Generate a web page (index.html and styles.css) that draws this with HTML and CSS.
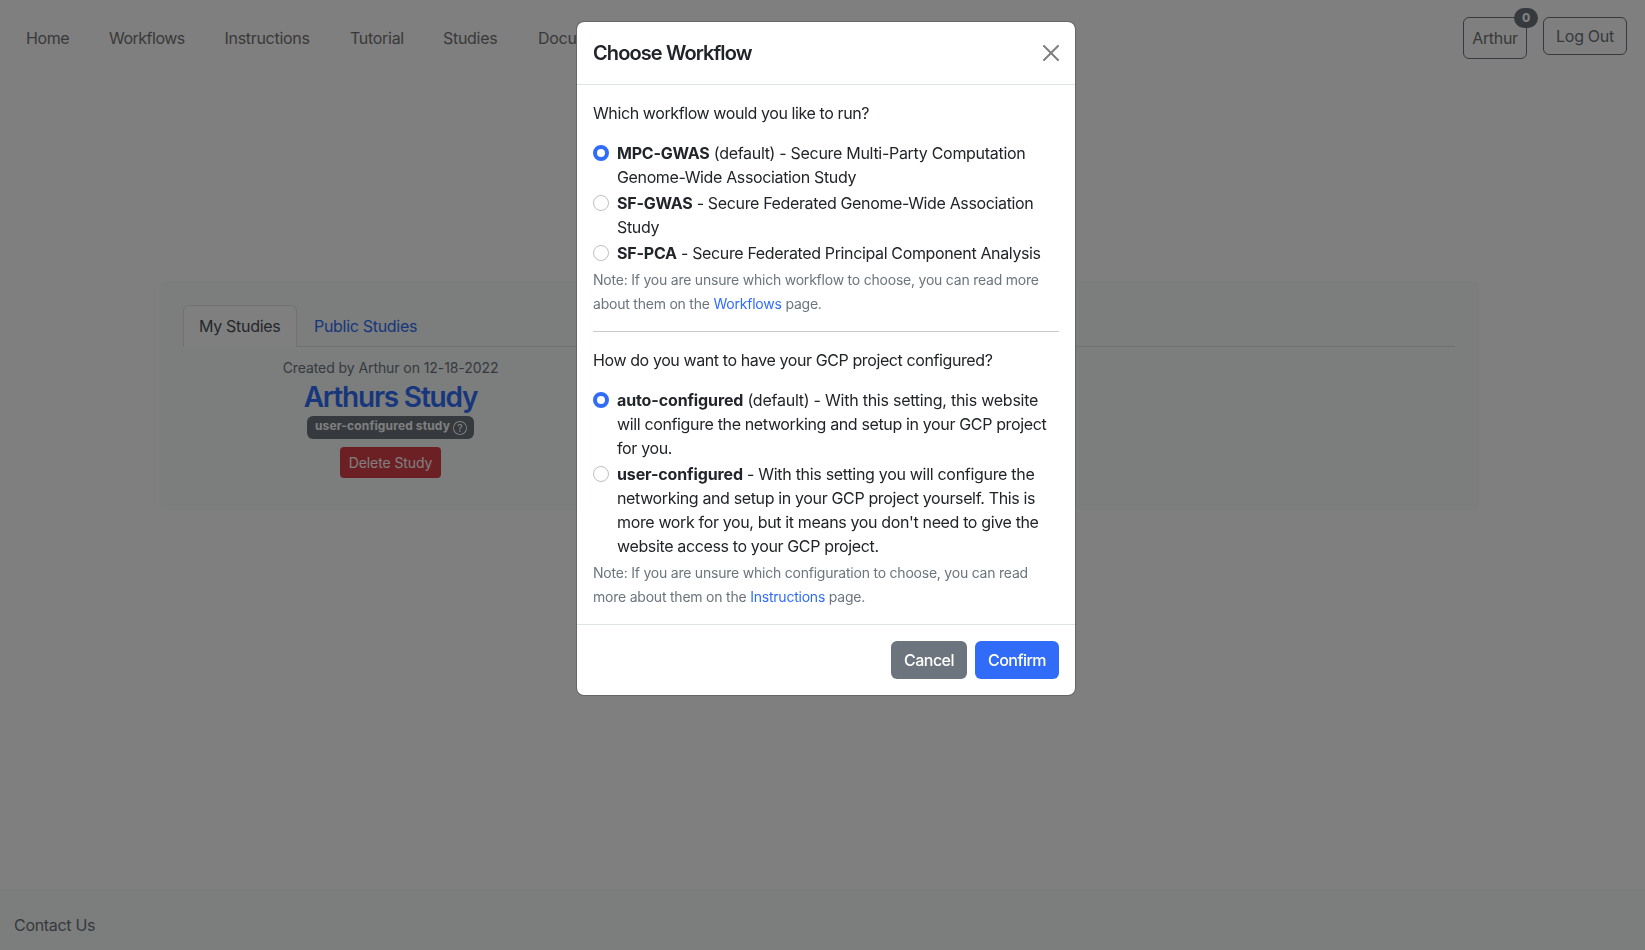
FILE: index.html
```
<!DOCTYPE html>
<html lang="en">
<head>
<meta charset="utf-8">
<title>Studies</title>
<link rel="stylesheet" href="styles.css">
</head>
<body>
<div class="page">
  <header class="topbar">
    <nav class="topnav">
      <a class="w-home">Home</a><a class="w-work">Workflows</a><a class="w-inst">Instructions</a><a class="w-tut">Tutorial</a><a class="w-stud">Studies</a><a class="w-docu">Docu</a>
    </nav>
    <div class="account">
      <button class="user-btn">Arthur<span class="count">0</span></button>
      <button class="logout-btn">Log Out</button>
    </div>
  </header>
  <main class="panel">
    <div class="tabs">
      <a class="tab active">My Studies</a>
      <a class="tab">Public Studies</a>
    </div>
    <section class="study">
      <div class="created">Created by Arthur on 12-18-2022</div>
      <h3 class="study-title">Arthurs Study</h3>
      <span class="badge"><span>user-configured study</span>
        <svg width="14" height="14" viewBox="0 0 16 16" fill="currentColor"><path d="M8 15A7 7 0 1 1 8 1a7 7 0 0 1 0 14zm0 1A8 8 0 1 0 8 0a8 8 0 0 0 0 16z"/><path d="M5.255 5.786a.237.237 0 0 0 .241.247h.825c.138 0 .248-.113.266-.25.09-.656.54-1.134 1.342-1.134.686 0 1.314.343 1.314 1.168 0 .635-.374.927-.965 1.371-.673.489-1.206 1.06-1.168 1.987l.003.217a.25.25 0 0 0 .25.246h.811a.25.25 0 0 0 .25-.25v-.105c0-.718.273-.927 1.01-1.486.609-.463 1.244-.977 1.244-2.056 0-1.511-1.276-2.241-2.673-2.241-1.267 0-2.655.59-2.75 2.286zm1.557 5.763c0 .533.425.927 1.01.927.609 0 1.028-.394 1.028-.927 0-.552-.42-.94-1.029-.94-.584 0-1.009.388-1.009.94z"/></svg>
      </span>
      <button class="delete-btn">Delete Study</button>
    </section>
  </main>
  <footer class="footer">Contact Us</footer>
</div>
<div class="backdrop">
  <div class="modal">
    <div class="modal-header">
      <h5 class="modal-title">Choose Workflow</h5>
      <svg class="close" width="16" height="16" viewBox="0 0 16 16"><path d="M.293.293a1 1 0 0 1 1.414 0L8 6.586 14.293.293a1 1 0 1 1 1.414 1.414L9.414 8l6.293 6.293a1 1 0 0 1-1.414 1.414L8 9.414l-6.293 6.293a1 1 0 0 1-1.414-1.414L6.586 8 .293 1.707a1 1 0 0 1 0-1.414z"/></svg>
    </div>
    <div class="modal-body">
      <p class="question">Which workflow would you like to run?</p>
      <label class="choice"><i class="radio on"></i><span><b class="caps">MPC-GWAS</b> <span class="wide">(default) - Secure Multi-Party Computation</span><br>Genome-Wide Association Study</span></label>
      <label class="choice"><i class="radio"></i><span><b class="caps">SF-GWAS</b> - Secure Federated Genome-Wide Association<br>Study</span></label>
      <label class="choice"><i class="radio"></i><span><b class="caps">SF-PCA</b> - Secure Federated Principal Component Analysis</span></label>
      <div class="note">Note: If you are unsure which workflow to choose, you can read more<br>about them on the <a>Workflows</a> page.</div>
      <hr>
      <p class="question">How do you want to have your GCP project configured?</p>
      <label class="choice"><i class="radio on"></i><span><b>auto-configured</b> <span class="wider">(default) - With this setting, this website</span><br>will configure the networking and setup in your GCP project<br>for you.</span></label>
      <label class="choice"><i class="radio"></i><span><b>user-configured</b> <span class="wide">- With this setting you will configure the</span><br>networking and setup in your GCP project yourself. This is<br>more work for you, but it means you don't need to give the<br>website access to your GCP project.</span></label>
      <div class="note">Note: If you are unsure which configuration to choose, you can read<br>more about them on the <a>Instructions</a> page.</div>
    </div>
    <div class="modal-footer">
      <button class="btn cancel">Cancel</button>
      <button class="btn confirm">Confirm</button>
    </div>
  </div>
</div>
</body>
</html>
```
FILE: styles.css
```
* { box-sizing: border-box; }
body {
  margin: 0;
  font: 400 16px/24px Inter, "Liberation Sans", sans-serif;
  letter-spacing: -0.3px;
  color: #212529;
  background: #fff;
  overflow: hidden;
}
button { font: inherit; letter-spacing: inherit; color: inherit; padding: 0; white-space: nowrap; }
.page { height: 950px; display: flex; flex-direction: column; }
.topbar { height: 281px; flex: none; display: flex; justify-content: space-between; align-items: flex-start; padding: 17px 18px 0 26px; }
.topnav { display: flex; gap: 40px; padding-top: 9px; color: #737373; white-space: nowrap; }
.w-home { width: 43px; letter-spacing: -0.4px; }
.w-work { width: 75.5px; letter-spacing: -0.5px; }
.w-inst { width: 85.5px; }
.w-tut { width: 53px; }
.w-stud { width: 55px; }
.account { display: flex; gap: 16px; align-items: flex-start; }
.user-btn { position: relative; width: 64px; height: 42px; border: 1px solid #6c757d; border-radius: 6px; background: none; color: #737373; }
.count { position: absolute; left: 50px; top: -10px; width: 24px; height: 20px; border-radius: 10px; background: #6c757d; color: #fff; font: 800 12px/20px Inter, sans-serif; }
.logout-btn { width: 84px; height: 38px; border: 1px solid #6c757d; border-radius: 6px; background: none; color: #6c757d; }
.panel { width: 1320px; height: 229px; flex: none; margin-left: 159px; padding: 24px; border-radius: 6px; background: #f8fcfa; }
.tabs { display: flex; height: 42px; border-bottom: 1px solid #dee2e6; }
.tab { height: 42px; padding: 8px 16px; border: 1px solid transparent; border-radius: 6px 6px 0 0; color: #316cf9; white-space: nowrap; }
.tab.active { width: 114px; padding-left: 15px; background: #fff; border-color: #dee2e6 #dee2e6 #fff; color: #495057; }
.study { width: 391px; padding-top: 9px; margin-left: 12px; display: flex; flex-direction: column; align-items: center; }
.created { font-size: 14px; line-height: 24px; letter-spacing: -0.08px; color: #6c757d; }
.study-title { margin: 0; font-size: 28px; font-weight: 600; line-height: 34px; letter-spacing: -1.2px; color: #316cf9; }
.badge { display: flex; align-items: center; justify-content: space-between; width: 167px; height: 23px; margin-top: 2px; padding: 0 7px 0 8px; border-radius: 6px; background: #6c757d; color: #fff; font-size: 12px; font-weight: 700; line-height: 12px; letter-spacing: 0.14px; white-space: nowrap; }
.badge > span { padding-bottom: 3px; }
.delete-btn { width: 101px; height: 31px; margin-top: 8px; border: 0; border-radius: 4px; background: #d84048; color: #fff; font-size: 14px; letter-spacing: -0.1px; }
.footer { margin-top: auto; height: 61px; padding: 24px 14px; background: #f8fcfa; color: #6c757d; }
.backdrop { position: fixed; inset: 0; background: rgba(0, 0, 0, .5); padding: 21px 0 0 576px; }
.modal { width: 500px; border: 1px solid rgba(0, 0, 0, .2); border-radius: 8px; background: #fff; background-clip: padding-box; }
.modal-header { display: flex; align-items: center; justify-content: space-between; padding: 16px; border-bottom: 1px solid #dee2e6; }
.modal-title { margin: 0; font-size: 20px; font-weight: 600; line-height: 30px; letter-spacing: -0.9px; }
.close { opacity: .5; }
.modal-body { padding: 16px; white-space: nowrap; }
.question { margin: 0 0 16px; letter-spacing: -0.4px; }
.choice { display: flex; gap: 8px; margin-bottom: 2px; letter-spacing: -0.36px; }
.choice b { font-weight: 700; letter-spacing: -0.12px; }
.choice .caps { letter-spacing: -0.2px; }
.wide { letter-spacing: -0.3px; }
.wider { letter-spacing: -0.24px; }
.radio { flex: none; width: 16px; height: 16px; margin-top: 4px; border: 1px solid #bfbfbf; border-radius: 50%; background: #fff; }
.radio.on { border: 4px solid #316cf9; }
.note { font-size: 14px; line-height: 24px; letter-spacing: -0.22px; color: #6c757d; padding-top: 1px; margin-bottom: -1px; }
.note a { color: #316cf9; }
hr { height: 1px; margin: 16px 0; border: 0; background: #c8c9ca; }
.modal-footer { display: flex; justify-content: flex-end; gap: 8px; padding: 16px; border-top: 1px solid #dee2e6; }
.btn { height: 38px; border: 0; border-radius: 6px; color: #fff; font-weight: 500; letter-spacing: -0.55px; }
.cancel { width: 76px; background: #6c757d; }
.confirm { width: 84px; background: #316cf9; }
```
